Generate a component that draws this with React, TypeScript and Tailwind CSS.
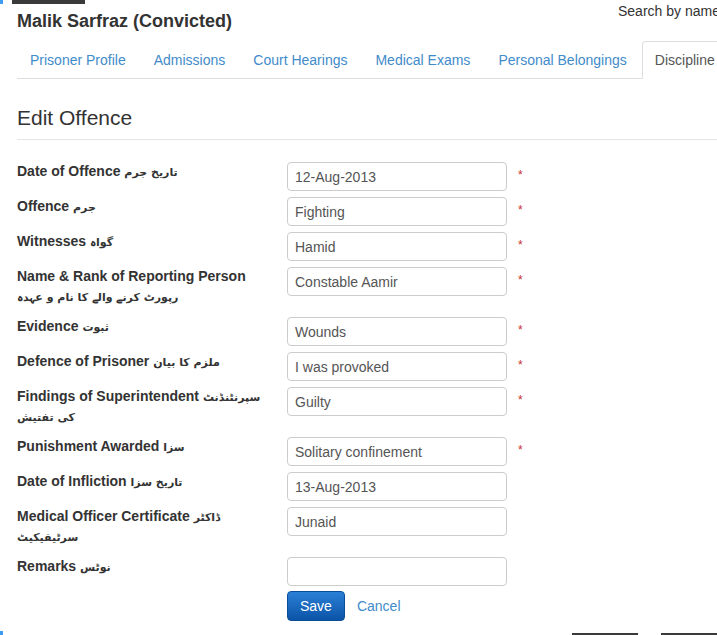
type Row = {
  en: string;
  ur: string;
  value: string;
  required?: boolean;
};

const tabs = ["Prisoner Profile", "Admissions", "Court Hearings", "Medical Exams", "Personal Belongings", "Discipline"];

const rows: Row[] = [
  { en: "Date of Offence", ur: "تاریخ جرم", value: "12-Aug-2013", required: true },
  { en: "Offence", ur: "جرم", value: "Fighting", required: true },
  { en: "Witnesses", ur: "گواہ", value: "Hamid", required: true },
  { en: "Name & Rank of Reporting Person", ur: "رپورٹ کرنے والے کا نام و عہدہ", value: "Constable Aamir", required: true },
  { en: "Evidence", ur: "ثبوت", value: "Wounds", required: true },
  { en: "Defence of Prisoner", ur: "ملزم کا بیان", value: "I was provoked", required: true },
  { en: "Findings of Superintendent", ur: "سپرنٹنڈنٹ کی تفتیش", value: "Guilty", required: true },
  { en: "Punishment Awarded", ur: "سزا", value: "Solitary confinement", required: true },
  { en: "Date of Infliction", ur: "تاریخ سزا", value: "13-Aug-2013" },
  { en: "Medical Officer Certificate", ur: "ڈاکٹر سرٹیفیکیٹ", value: "Junaid" },
  { en: "Remarks", ur: "نوٹس", value: "" },
];

const FormRow = ({ en, ur, value, required }: Row) => (
  <div className="mb-[5px] flex items-start">
    <label className="w-[270px] pr-[16px] pb-[5px] text-[14px] font-bold leading-[20px] text-[#333]">
      {en} <span className="font-['DejaVu_Sans',sans-serif] text-[11px] font-bold leading-[12px]">{ur}</span>
    </label>
    <input
      readOnly
      defaultValue={value}
      className="mt-[1px] h-[29px] w-[220px] rounded-[4px] border border-[#ccc] bg-white px-[7px] text-[14px] text-[#555] outline-none"
    />
    {required ? <span className="ml-[11px] mt-[8px] text-[12px] leading-none text-[#c9302c]">*</span> : null}
  </div>
);

const App = () => (
  <div className="relative h-[635px] w-[717px] overflow-hidden bg-white font-['Liberation_Sans',Arial,sans-serif] text-[14px] text-[#333]">
    <div className="absolute left-0 top-0 h-[4px] w-[3px] bg-[#3d9bf0]" />
    <div className="absolute left-[12px] top-0 h-[4px] w-[73px] bg-[#3a3a3a]" />

    <header className="flex h-[41px]">
      <h1 className="mt-[8px] w-[618px] shrink-0 pl-[17px] text-[18px] font-bold leading-[26px]">Malik Sarfraz (Convicted)</h1>
      <div className="mt-[1px] whitespace-nowrap leading-[20px]">Search by name</div>
    </header>

    <ul className="ml-[17px] flex border-b border-[#ddd]">
      {tabs.map((t) => {
        const active = t === "Discipline";
        return (
          <li key={t} className="-mb-px mr-[2px] shrink-0">
            <a
              className={
                active
                  ? "block whitespace-nowrap rounded-t-[4px] border border-[#ddd] border-b-white bg-white px-[12px] py-[8px] leading-[20px] text-[#555]"
                  : "block whitespace-nowrap rounded-t-[4px] border border-transparent px-[12px] py-[8px] leading-[20px] text-[#428bca]"
              }
            >
              {t}
            </a>
          </li>
        );
      })}
    </ul>

    <h2 className="ml-[17px] mt-[24px] border-b border-[#e5e5e5] pb-[6px] text-[21px] leading-[30px]">Edit Offence</h2>

    <form className="mt-[21px] pl-[17px]">
      {rows.map((r) => (
        <FormRow key={r.en} {...r} />
      ))}
      <div className="flex items-center pl-[270px]">
        <button
          type="button"
          className="h-[30px] rounded-[4px] border border-[#0a4c96] bg-gradient-to-b from-[#2a80d6] to-[#0b54a8] px-[12px] text-[14px] text-white"
        >
          Save
        </button>
        <a className="ml-[12px] text-[14px] text-[#428bca]">Cancel</a>
      </div>
    </form>

    <div className="absolute bottom-0 left-0 h-[4px] w-[3px] bg-[#3d9bf0]" />
    <div className="absolute bottom-0 left-[572px] h-[2px] w-[66px] bg-[#3a3a3a]" />
    <div className="absolute bottom-0 left-[661px] h-[2px] w-[56px] bg-[#3a3a3a]" />
  </div>
);

export default App;
